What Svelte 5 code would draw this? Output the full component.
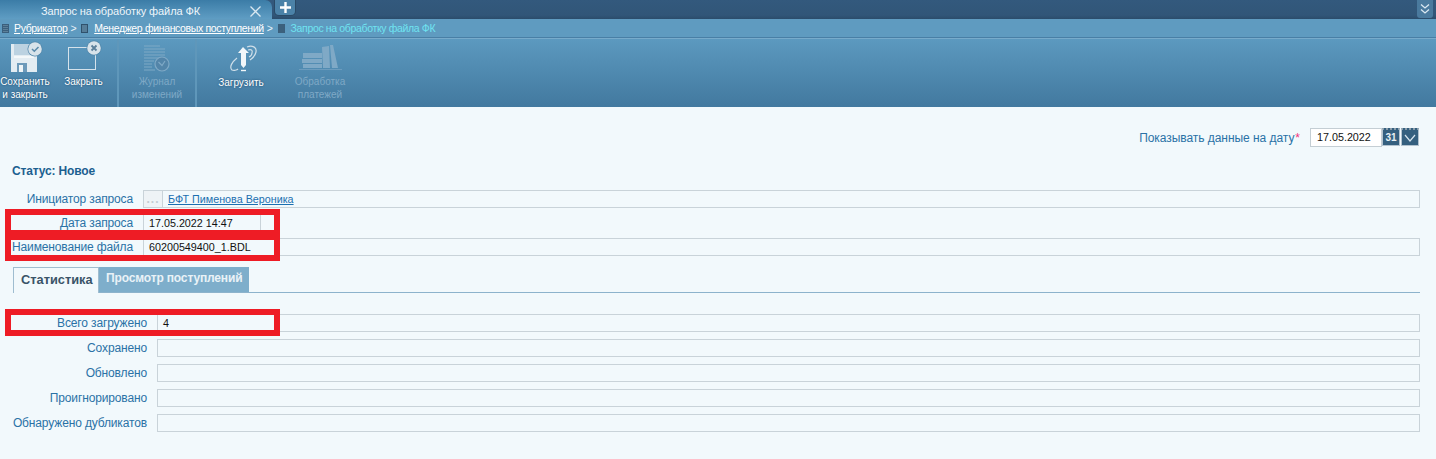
<script lang="ts">
	const stats = [
		{ label: "Всего загружено", value: "4" },
		{ label: "Сохранено", value: "" },
		{ label: "Обновлено", value: "" },
		{ label: "Проигнорировано", value: "" },
		{ label: "Обнаружено дубликатов", value: "" }
	];
</script>

<div class="page">
	<div class="tabbar">
		<div class="doc-tab">
			<span class="doc-title">Запрос на обработку файла ФК</span>
			<svg class="tab-close" width="11" height="11" viewBox="0 0 11 11" fill="none" stroke="#d9e8f1" stroke-width="1.3"><path d="M.5.5l10 10M10.500.5l-10 10" /></svg>
		</div>
		<div class="tab-add">
			<svg width="11" height="11" viewBox="0 0 11 11" fill="none" stroke="#fff" stroke-width="2.400"><path d="M5.500 0v11M0 5.500h11" /></svg>
		</div>
		<div class="tab-more">
			<svg width="10" height="12" viewBox="0 0 10 12" fill="none" stroke="#dbe9f2" stroke-width="1.300"><path d="M1 1.500l4 3.500 4-3.500M1 6.500l4 3.500 4-3.500" /></svg>
		</div>
	</div>

	<div class="crumbs">
		<span class="crumb-icon"></span><a class="crumb-link" href="#a">Рубрикатор</a><span class="sep">&gt;</span>
		<span class="crumb-icon second"></span><a class="crumb-link" href="#b">Менеджер финансовых поступлений</a><span class="sep">&gt;</span>
		<span class="crumb-icon third"></span><span class="crumb-current">Запрос на обработку файла ФК</span>
	</div>

	<div class="toolbar">
		<div class="tool save">
			<svg width="50" height="36" viewBox="0 0 50 36">
				<path d="M11 5h21l5 5v23H11z" fill="#e3ecf2" />
				<path d="M14 5h17v11H14z" fill="#bcd2e1" />
				<path d="M14 17h20v2H14z" fill="#f4f8fa" />
				<path d="M17 24h10v9H17z" fill="#6d9aba" />
				<path d="M19 26h4v7h-4z" fill="#eef4f7" />
				<circle cx="35" cy="10" r="7.500" fill="#4f86aa" />
				<circle cx="35" cy="10" r="6.800" fill="#d8e3ea" />
				<path d="M32 10l2.300 2.300L38.500 8" fill="none" stroke="#5a8aaa" stroke-width="1.500" />
			</svg>
			<span>Сохранить<br />и закрыть</span>
		</div>
		<div class="tool close">
			<svg width="67" height="36" viewBox="0 0 67 36">
				<rect x="18.500" y="8.500" width="27" height="22" fill="none" stroke="#d5e2eb" />
				<circle cx="44" cy="9" r="7.500" fill="#4f86aa" />
				<circle cx="44" cy="9" r="6.800" fill="#d8e3ea" />
				<path d="M41.500 6.500l5 5M46.500 6.500l-5 5" stroke="#5a7f9a" stroke-width="1.800" />
			</svg>
			<span>Закрыть</span>
		</div>
		<div class="tool log disabled">
			<svg width="76" height="36" viewBox="0 0 76 36" fill="none" stroke="#7fa9c6" stroke-width="1.200">
				<path d="M25 7h16M25 10h21M25 13h21M25 16h21M25 19h21M25 22h10M25 25h8M25 28h8M25 31h11" />
				<circle cx="43" cy="25" r="7" fill="#5385a9" />
				<path d="M39.500 23l3.500 3.500 3-4.500" />
			</svg>
			<span>Журнал<br />изменений</span>
		</div>
		<div class="tool upload">
			<svg width="88" height="36" viewBox="0 0 88 36" fill="none">
				<path d="M40 19C35 23 32 28 35 31c2 1 5 0 6-1" stroke="#cfdfe9" stroke-width="1.200" />
				<path d="M50 8c5-2 10 0 9 5-1 4-3 6-6 8" stroke="#cfdfe9" stroke-width="1.200" />
				<path d="M51 11c3-1 5 0 4 3 0 2-1 3-3 4" stroke="#cfdfe9" stroke-width="1.200" />
				<path d="M46 8l6 6h-3v12l-2.500 3-2.500-3V14h-3z" fill="#f1f6f9" />
				<path d="M44 31.500h5" stroke="#f1f6f9" stroke-width="1.400" />
			</svg>
			<span>Загрузить</span>
		</div>
		<div class="tool pay disabled">
			<svg width="70" height="36" viewBox="0 0 70 36" fill="#7fa9c6">
				<path d="M18 14h19v5H18zM17 20h20v4H17zM18 25h19v4H18z" />
				<path d="M37 8l7-1 1 22h-7zM45 6l3 0 5 23h-6z" />
				<path d="M14 30h43v1H14z" opacity=".6" />
			</svg>
			<span>Обработка<br />платежей</span>
		</div>
	</div>

	<main class="content">
		<div class="date-line">
			<span class="field-label date-label">Показывать данные на дату</span><span class="req">*</span>
			<span class="date-input">17.05.2022</span>
			<span class="cal-btn">31</span>
			<span class="cal-btn next">
				<svg width="12" height="8" viewBox="0 0 12 8" fill="none" stroke="#d6e4ee" stroke-width="1.200"><path d="M1 1l5 6 5-6" /></svg>
			</span>
		</div>

		<div class="status">Статус: Новое</div>

		<div class="rows">
			<div class="row">
				<span class="field-label">Инициатор запроса</span>
				<div class="box">
					<span class="picker">...</span>
					<a class="value-link" href="#c">БФТ Пименова Вероника</a>
				</div>
			</div>
			<div class="row">
				<span class="field-label">Дата запроса</span>
				<div class="box short"><span class="value cell">17.05.2022 14:47</span></div>
			</div>
			<div class="row">
				<span class="field-label">Наименование файла</span>
				<div class="box"><span class="value">60200549400_1.BDL</span></div>
			</div>
		</div>

		<div class="tabs">
			<div class="tab active">Статистика</div>
			<div class="tab">Просмотр поступлений</div>
		</div>

		<div class="rows stats">
			{#each stats as s}
				<div class="row">
					<span class="field-label">{s.label}</span>
					<div class="box"><span class="value">{s.value}</span></div>
				</div>
			{/each}
		</div>

		<div class="mark mark-top"><i></i><i></i></div>
		<div class="mark mark-bottom"><i></i></div>
	</main>
</div>

<style>
	:global(body) {
		margin: 0;
		background: #f2f9fc;
	}

	.page {
		width: 1436px;
		height: 459px;
		overflow: hidden;
		font-family: "Liberation Sans", Arial, sans-serif;
		font-size: 12px;
		background: #f2f9fc;
	}

	.tabbar {
		height: 19px;
		display: flex;
		align-items: flex-start;
		background: linear-gradient(#33597d, #315678 80%, #2b4c6b);
	}

	.doc-tab {
		width: 272px;
		height: 19px;
		box-sizing: border-box;
		padding: 3px 0 0 41px;
		display: flex;
		align-items: center;
		color: #eef6fb;
		font-size: 11px;
		letter-spacing: -0.1px;
		background: linear-gradient(#3b7ca7, #5f9dc3);
		border-top-right-radius: 7px;
	}

	.doc-title {
		flex: 1;
	}

	.tab-close {
		margin-right: 11px;
	}

	.tab-add {
		width: 20px;
		height: 15px;
		margin-left: 3px;
		display: grid;
		place-items: center;
		background: #4b82a8;
		box-shadow: 0 0 0 1px #2a4a67;
		border-radius: 0 0 4px 4px;
	}

	.tab-more {
		width: 16px;
		height: 18px;
		margin-left: auto;
		margin-right: 3px;
		display: grid;
		place-items: center;
		background: #4a7a9e;
		border-radius: 0 0 3px 3px;
	}

	.crumbs {
		height: 19px;
		box-sizing: border-box;
		display: flex;
		align-items: center;
		padding-left: 2px;
		font-size: 10.500px;
		letter-spacing: -0.35px;
		color: #eaf4fa;
		background: #5f9bc0;
		border-bottom: 1px solid #497fa5;
	}

	.crumb-icon {
		width: 7px;
		height: 9px;
		margin-right: 5px;
		background: repeating-linear-gradient(#3a5f7d 0 1px, #5d8098 1px 2px);
		box-shadow: inset 1px 0 #3a5f7d, inset -1px 0 #3a5f7d;
	}

	.crumb-icon.second {
		margin-left: 5px;
		margin-right: 6px;
		background: #567d98;
		box-shadow: inset 0 0 0 1px #2f516c;
	}

	.crumb-icon.third {
		margin-left: 5px;
		margin-right: 6px;
		background: #3c617d;
	}

	.crumb-link {
		color: #fff;
		text-decoration: underline;
	}

	.sep {
		margin-left: 3px;
	}

	.crumb-current {
		color: #6fe3f0;
	}

	.toolbar {
		height: 69px;
		display: flex;
		box-sizing: border-box;
		background: linear-gradient(#5c99bf, #42799f);
		border-top: 1px solid #78abcb;
	}

	.tool {
		display: flex;
		flex-direction: column;
		align-items: center;
		color: #fff;
		font-size: 10px;
		line-height: 13px;
		text-align: center;
		text-shadow: 0 0 2px #16456a;
	}

	.tool svg {
		display: block;
		flex: none;
	}

	.tool.save {
		width: 50px;
	}

	.tool.close {
		width: 67px;
		border-right: 2px solid #5f97ba;
	}

	.tool.log {
		width: 76px;
		border-right: 2px solid #5f97ba;
	}

	.tool.upload {
		width: 88px;
	}

	.tool.upload svg {
		margin-bottom: 1px;
	}

	.tool.pay {
		width: 70px;
	}

	.tool.disabled {
		color: #7fa9c6;
		text-shadow: none;
	}

	.content {
		position: relative;
		padding: 21px 16px 0 0;
	}

	.date-line {
		height: 19px;
		display: flex;
		align-items: center;
		justify-content: flex-end;
		margin-right: 1px;
	}

	.field-label {
		color: #2a72a6;
		letter-spacing: -0.14px;
	}

	.date-label {
		letter-spacing: -0.05px;
	}

	.req {
		color: #f0357c;
		margin: 0 10px 0 1px;
	}

	.date-input {
		width: 72px;
		height: 19px;
		box-sizing: border-box;
		padding-left: 6px;
		line-height: 17px;
		font-size: 10.750px;
		background: #fff;
		border: 1px solid #c4ced4;
		color: #111;
	}

	.cal-btn {
		width: 18px;
		height: 18px;
		box-sizing: border-box;
		display: grid;
		place-items: center;
		font-size: 10px;
		font-weight: bold;
		color: #e8f0f5;
		background: #35607f;
		border: 1px solid #b3c3cf;
		border-top: 2px dotted #8a9caa;
		align-self: flex-start;
	}

	.cal-btn.next {
		margin-left: 1px;
	}

	.status {
		margin: 17px 0 0 12px;
		color: #1c6090;
		font-weight: bold;
		letter-spacing: -0.15px;
		line-height: 14px;
	}

	.rows {
		margin-top: 12px;
		display: flex;
		flex-direction: column;
		gap: 6px;
	}

	.row {
		display: grid;
		grid-template-columns: 133px 1fr;
		column-gap: 10px;
		height: 18px;
		align-items: center;
	}

	.row .field-label {
		text-align: right;
		white-space: nowrap;
	}

	.box {
		height: 18px;
		box-sizing: border-box;
		display: flex;
		align-items: center;
		border: 1px solid #c9d3d9;
		font-size: 10.750px;
	}

	.box.short {
		width: 137px;
	}

	.picker {
		width: 19px;
		height: 16px;
		flex: none;
		box-sizing: border-box;
		text-align: center;
		font-size: 12px;
		letter-spacing: 1px;
		line-height: 16px;
		font-weight: bold;
		color: #c3ccd2;
		background: #eef3f6;
		border-right: 1px solid #c9d3d9;
	}

	.value-link {
		margin-left: 5px;
		color: #1b6fb0;
		text-decoration: underline;
	}

	.value {
		margin-left: 5px;
		color: #111;
	}

	.value.cell {
		width: 111px;
		height: 16px;
		line-height: 16px;
		border-right: 1px solid #c9d3d9;
	}

	.tabs {
		margin: 11px 0 0 13px;
		height: 26px;
		box-sizing: border-box;
		display: flex;
		align-items: flex-start;
		border-bottom: 1px solid #8db3cc;
	}

	.tab {
		width: 150px;
		height: 25px;
		box-sizing: border-box;
		padding-left: 7px;
		line-height: 23px;
		letter-spacing: -0.15px;
		font-weight: bold;
		color: #e9f2f7;
		background: #7eaecb;
		white-space: nowrap;
	}

	.tab.active {
		width: 86px;
		height: 26px;
		line-height: 24px;
		font-size: 12.800px;
		letter-spacing: 0;
		color: #3a5468;
		background: #f2f9fc;
		border: 1px solid #9fbdd0;
		border-bottom: none;
	}

	.stats {
		margin-top: 21px;
		gap: 7px;
	}

	.stats .row {
		grid-template-columns: 147px 1fr;
	}

	.mark {
		position: absolute;
		left: 5px;
		width: 263px;
		border: 6px solid #ee1c25;
		pointer-events: none;
	}

	.mark i {
		display: block;
		height: 15px;
	}

	.mark i + i {
		border-top: 10px solid #ee1c25;
	}

	.mark-top {
		top: 102px;
	}

	.mark-bottom {
		top: 202px;
	}
</style>
